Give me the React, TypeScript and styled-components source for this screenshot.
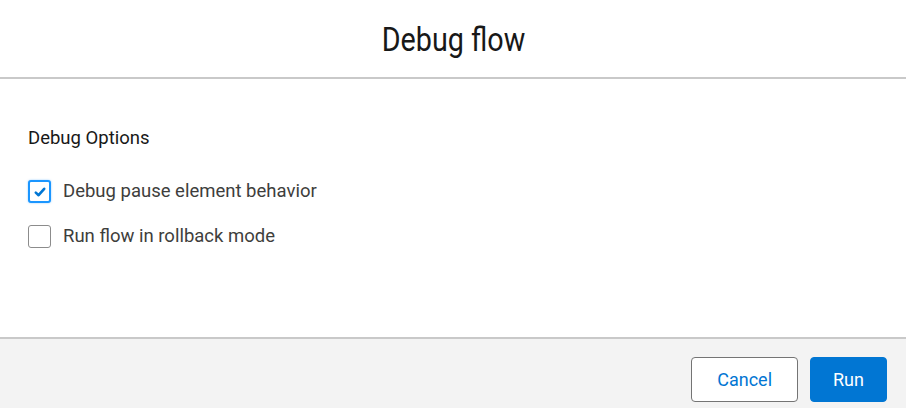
import React, { useState } from 'react';
import styled, { createGlobalStyle } from 'styled-components';

const GlobalStyle = createGlobalStyle`
  body {
    margin: 0;
    font-family: Roboto, "Liberation Sans", Arial, sans-serif;
    background: #ffffff;
  }
  * {
    box-sizing: border-box;
  }
`;

type Option = {
  id: string;
  label: string;
  checked: boolean;
};

const initialOptions: Option[] = [
  { id: 'pause', label: 'Debug pause element behavior', checked: true },
  { id: 'rollback', label: 'Run flow in rollback mode', checked: false },
];

const App = () => {
  const [options, setOptions] = useState(initialOptions);

  const toggle = (id: string) => {
    setOptions((prev) =>
      prev.map((o) => (o.id === id ? { ...o, checked: !o.checked } : o))
    );
  };

  return (
    <>
      <GlobalStyle />
      <Modal>
        <Header>
          <Title>Debug flow</Title>
        </Header>
        <Body>
          <SectionTitle>Debug Options</SectionTitle>
          <OptionList>
            {options.map((o) => (
              <OptionRow key={o.id} onClick={() => toggle(o.id)}>
                <CheckBox $checked={o.checked}>
                  {o.checked && (
                    <svg width="14" height="14" viewBox="0 0 14 14">
                      <path
                        d="M2.8 7.6 L5.6 10.2 L11.2 3.8"
                        fill="none"
                        stroke="#0176d3"
                        strokeWidth="2.6"
                        strokeLinecap="round"
                        strokeLinejoin="round"
                      />
                    </svg>
                  )}
                </CheckBox>
                <OptionLabel>{o.label}</OptionLabel>
              </OptionRow>
            ))}
          </OptionList>
        </Body>
        <Footer>
          <Button>Cancel</Button>
          <Button $primary>Run</Button>
        </Footer>
      </Modal>
    </>
  );
};

export default App;

const Modal = styled.div`
  width: 906px;
  height: 408px;
  display: flex;
  flex-direction: column;
  background: #ffffff;
`;

const Header = styled.div`
  height: 79px;
  display: flex;
  align-items: center;
  justify-content: center;
  border-bottom: 2px solid #c9c9c9;
`;

const Title = styled.h1`
  margin: 0;
  font-family: Roboto, "Liberation Sans", sans-serif;
  font-weight: 400;
  font-size: 33px;
  line-height: 1;
  color: #181818;
  transform: scaleX(0.87);
  padding-top: 1px;
`;

const Body = styled.div`
  flex: 1;
  padding: 47px 28px 0;
  border-bottom: 2px solid #c9c9c9;
`;

const SectionTitle = styled.div`
  font-size: 18.5px;
  line-height: 24px;
  color: #181818;
  margin-bottom: 30px;
`;

const OptionList = styled.div`
  display: flex;
  flex-direction: column;
  gap: 22px;
`;

const OptionRow = styled.label`
  display: flex;
  align-items: center;
  gap: 12px;
  cursor: pointer;
`;

const CheckBox = styled.span<{ $checked: boolean }>`
  width: 23px;
  height: 23px;
  border-radius: 3px;
  display: flex;
  align-items: center;
  justify-content: center;
  background: #ffffff;
  border: ${(p) => (p.$checked ? '2px solid #1b96ff' : '1px solid #8c8c8c')};
  box-shadow: ${(p) => (p.$checked ? '0 0 2px rgba(27,150,255,0.5)' : 'none')};
`;

const OptionLabel = styled.span`
  font-size: 18.5px;
  line-height: 23px;
  color: #3e3e3c;
`;

const Footer = styled.div`
  height: 69px;
  background: #f3f3f3;
  display: flex;
  align-items: flex-start;
  justify-content: flex-end;
  gap: 12px;
  padding: 18px 19px 0 0;
`;

const Button = styled.button<{ $primary?: boolean }>`
  height: 45px;
  padding: ${(p) => (p.$primary ? '0 22px' : '0 25px')};
  border-radius: 4px;
  font-family: Roboto, "Liberation Sans", sans-serif;
  font-size: 18px;
  cursor: pointer;
  background: ${(p) => (p.$primary ? '#0176d3' : '#ffffff')};
  color: ${(p) => (p.$primary ? '#ffffff' : '#0176d3')};
  border: 1px solid ${(p) => (p.$primary ? '#0176d3' : '#747474')};
`;
